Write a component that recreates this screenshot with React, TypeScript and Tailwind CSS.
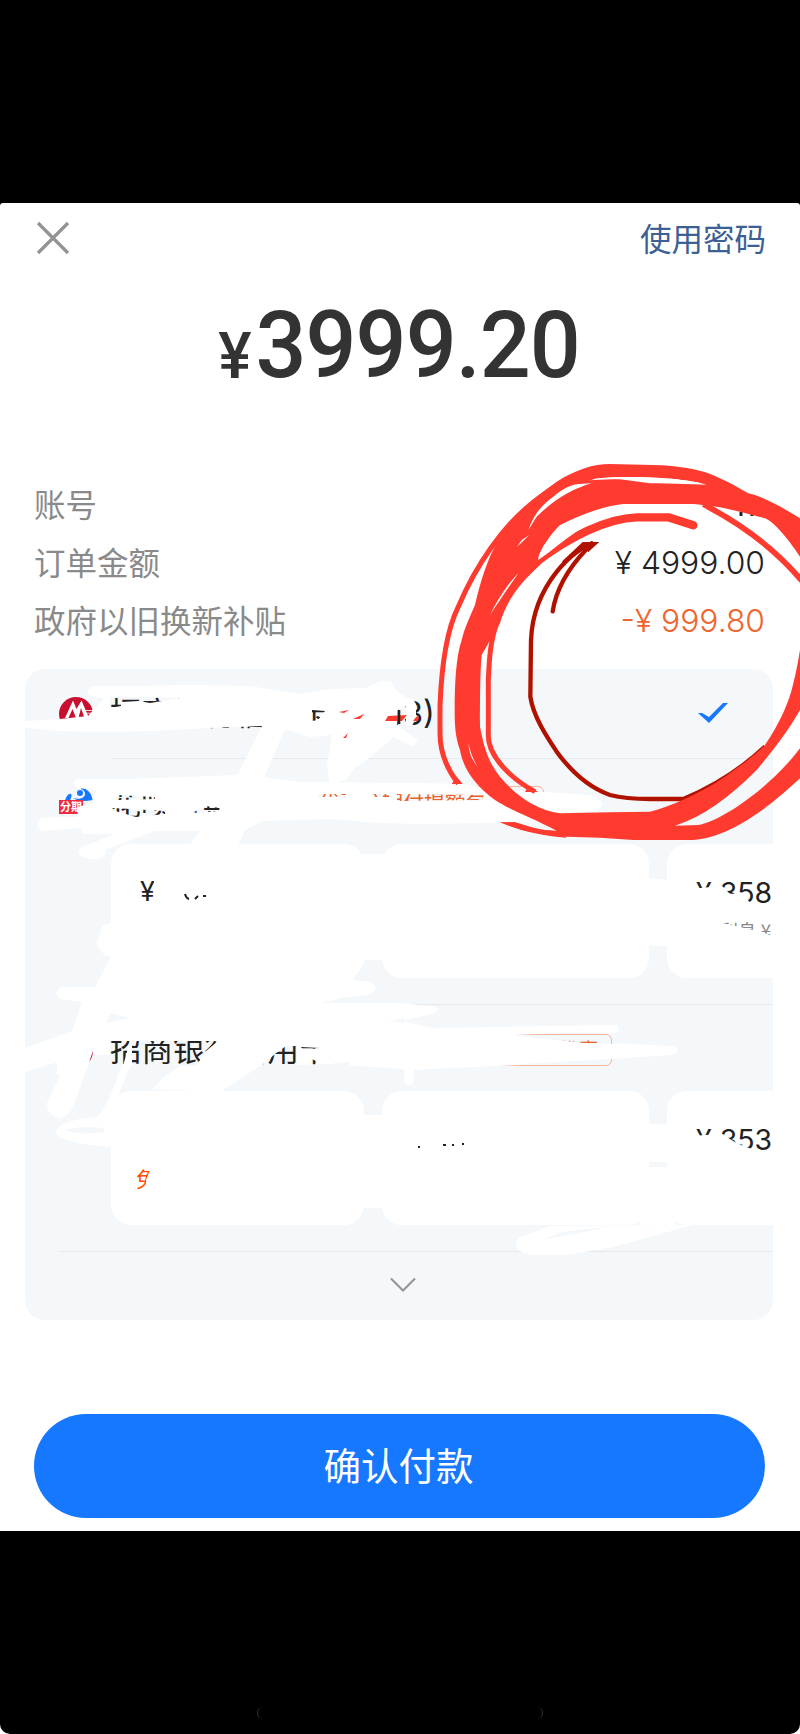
const rows = [
  { label: "账号", value: "****77", color: "text-[#222]" },
  { label: "订单金额", value: "¥ 4999.00", color: "text-[#222]" },
  { label: "政府以旧换新补贴", value: "-¥ 999.80", color: "text-[#f0642d]" },
];

function BankLogo() {
  return (
    <svg viewBox="0 0 34 34" className="w-[34px] h-[34px]">
      <circle cx="17" cy="17" r="17" fill="#c8102e" />
      <path d="M6 21 L14 3.500 L17.500 12 L22.500 3.500 L30 21 L25.500 21 L22 11 L19.500 21 L17 21 L13.500 12 L9.500 21Z" fill="#fff" />
      <path d="M26 13.500 H34 M27 16.200 H34" stroke="#fff" strokeWidth=".8" />
    </svg>
  );
}

function InstallmentLogo() {
  return (
    <div className="relative h-[34px] w-[34px]">
      <svg viewBox="0 0 34 34" className="h-[34px] w-[34px]">
        <path d="M6 14 C7 9 10 6 12 7 C14 9 10 14 10 18Z" fill="#1677ff" />
        <circle cx="21" cy="6" r="3" fill="#1677ff" />
        <path d="M22 0 C29 2 33 7 33.500 13 C25 15 18 14 14 11 C20 13 26 11 26 7 C26 4 24 3 22 2Z" fill="#1677ff" />
      </svg>
      <span className="absolute left-0 top-[13px] flex h-[14px] w-[24px] items-center bg-[#ef2b3f] pl-px text-[11px] leading-none font-bold text-white">
        分期
      </span>
    </div>
  );
}

function Plans({ first, firstNote, last, lastNote }: { first: string; firstNote: string; last: string; lastNote: string }) {
  return (
    <div className="ml-[86px] flex h-[134px] gap-[18px] overflow-hidden">
      <div className="w-[253px] shrink-0 rounded-[20px] bg-white pl-[29px] pt-[34px]">
        <div className="font-[Inter] text-[27px] leading-[28px] text-[#222]">{first}</div>
        <div className="mt-[13px] -ml-[4px] text-[21px] leading-6 text-[#ff5000]">{firstNote}</div>
      </div>
      <div className="w-[267px] shrink-0 rounded-[20px] bg-white" />
      <div className="w-[106px] shrink-0 rounded-l-[20px] bg-white pl-[29px] pt-[35px] whitespace-nowrap">
        <div className="font-[Inter] text-[28.500px] leading-[28px] text-[#222]">{last}</div>
        <div className="mt-[11px] pl-[5px] text-[18.500px] leading-6 text-[#888]">{lastNote}</div>
      </div>
    </div>
  );
}

// White eraser strokes that hide the private details
function Eraser() {
  return (
    <g mask="url(#gaps)" fill="#fff" strokeLinecap="round" strokeLinejoin="round">
      <rect x="600" y="490" width="166" height="29" />
      <path d="M92 686 L140 686 L187 685 L250 686 L300 694 L330 689 L365 688 L381 681 L392 682 L396 691 L404 695 L408 705 L398 709 L397 726 L418 740 L413 747 L394 737 L370 757 L355 768 L345 780 L330 784 L327 765 L332 735 L310 737 L285 729 L264 778 L236 778 L262 726 L210 728 L150 731 L100 732 L60 731 L25 728 L25 721 L60 719 L88 716 L104 698 L92 697 Q84 692 92 686Z" />
      <path d="M406 698 L412 698 L416 704 L416 718 L412 726 L406 726Z" />
      <path d="M78 779 L130 779 L238 775 L263 777 L300 782 L420 783 L462 784 L500 790 L545 792 L590 795 Q610 802 596 811 L560 813 L560 822 L420 824 L380 823 L330 819 L262 821 L245 830 L238 845 L190 845 L200 831 L155 831 L105 850 Q108 859 95 859 Q74 858 80 848 L115 834 L83 834 L80 828 L42 831 Q33 825 42 818 L60 817 L78 817 L77 807 L94 803 L96 790 L78 788 Q70 783 78 779Z" />
      <path d="M356 854 H390 V960 H356Z M640 878 L675 880 V947 L640 945Z M356 1115 H390 V1208 H356Z M640 1124 H675 V1162 H640Z M640 1167 H675 V1225 H640Z" />
      <path d="M111 923 L102 926 L100 936 Q93 944 101 950 Q104 957 111 957 L95 987 L61 987 Q52 993 61 999 L82 1002 L72 1031 L25 1048 V1072 L68 1059 L47 1103 Q47 1116 60 1118 Q72 1114 74 1104 L86 1071 L93 1055 H126 L110 1097 L98 1117 Q55 1120 56 1134 Q65 1144 112 1147 L120 1091 L130 1066 L180 1066 L163 1078 L153 1089 L220 1092 L260 1066 L330 1064 L404 1069 L405 1083 Q409 1087 413 1083 L414 1070 L450 1068 L520 1065 L610 1059 L672 1055 Q684 1050 672 1046 L610 1043 L514 1036 L617 1033 Q620 1028 617 1025 L500 1027 L433 1028 L400 1021 L432 1014 Q444 1008 430 1006 L400 1003 L322 1003 L340 998 L368 995 Q382 988 370 982 L353 980 L364 962 L120 962 L120 983 L210 984 L277 1000 L307 985 L323 978 L364 965Z" />
      <path d="M550 1226 L518 1238 Q511 1252 533 1255 L567 1255 L613 1247 L693 1225Z" />
      <path d="M57 1035 H84 V1075 H57Z" />
    </g>
  );
}

// Hand drawn marker circle, in units of a third of a pixel
function Marker() {
  return (
    <g transform="translate(420 450) scale(.33333)" fill="none">
      <path d="M520 281 C470 290 340 400 333 570 L331 740 C340 800 380 860 410 905 C450 960 500 1010 570 1035 C620 1048 660 1047 700 1047 L790 1047 C880 1010 960 960 1035 890" stroke="#b11200" strokeWidth="13" />
      <path d="M515 280 L500 297 C440 360 408 420 398 484" stroke="#b11200" strokeWidth="13" strokeLinecap="round" />
      <path d="M488 276 H538 L505 306 L495 298 L505 284 L440 336 L425 335Z" fill="#b11200" />
      <g stroke="#ff3b30">
        <path d="M115 1001 C75 950 60 900 60 850 L60 770 C66 600 90 520 115 470 C170 340 250 230 330 165 C380 125 420 95 460 80" strokeWidth="15" />
        <path d="M850 163 C960 220 1060 290 1145 392" strokeWidth="17" />
        <path d="M820 226 L745 202 L650 202 C560 205 450 260 350 335" strokeWidth="25" strokeLinecap="round" strokeLinejoin="round" />
        <path d="M345 1025 C280 990 200 920 205 850 L205 690 C208 620 212 570 230 520" strokeWidth="15" />
      </g>
      <path fill="#ff3b30" d="M330 155 L410 95 C470 58 520 42 570 42 L730 46 C800 52 850 62 885 78 C930 98 960 115 985 130 L940 140 L860 104 C780 80 600 76 525 86 L475 104 L400 138Z" />
      <path fill="#ff3b30" d="M240 1117 H285 L350 1138 L420 1144 L440 1163 C360 1157 300 1142 240 1117Z M315 1026 L355 1026 L325 1008Z M95 1002 H128 L110 980Z" />
      <path fill="#ff3b30" d="M104 780 C104 700 108 620 125 570 C135 530 150 500 165 465 C180 400 200 330 235 270 C270 210 320 160 380 130 C430 100 480 88 600 88 L690 100 L850 100 L950 122 L985 130 C1040 143 1090 175 1140 205 L1140 320 C1100 260 1060 215 1035 205 C960 185 880 162 800 162 L610 162 C540 170 470 200 420 225 C390 255 370 285 352 325 L400 300 L360 345 C300 400 260 450 240 520 C225 545 200 590 185 615 C182 650 180 700 180 830 C190 880 200 930 240 980 C290 1040 350 1080 420 1090 L570 1087 L690 1085 C750 1070 840 1030 900 990 C960 950 1010 910 1035 885 C1080 820 1110 750 1120 700 C1130 660 1135 630 1140 600 L1140 780 C1100 850 1060 900 1010 960 C930 1040 850 1100 765 1127 L835 1125 C900 1115 1050 1015 1140 895 L1140 985 C1080 1040 950 1160 820 1170 L640 1170 L540 1163 L440 1160 C360 1155 300 1140 240 1117 L285 1117 C330 1130 370 1145 410 1142 C330 1100 270 1080 225 1050 C170 1010 130 960 120 900 C105 860 104 820 104 780Z" />
      <path fill="#ff3b30" d="M325 245 L425 195 L560 165 L480 195 C430 218 390 240 352 268 L350 335 L290 375Z" />
      <path fill="#fff" d="M355 322 L372 285 L430 243 C500 205 560 180 640 162 L820 162 L840 166 L830 212 L750 188 L650 189 C590 190 540 205 490 232 C440 262 400 300 355 330Z" />
      <path fill="#fff" d="M400 140 C425 118 450 105 475 102 L515 100 C460 115 400 150 350 200 L325 240 C340 195 365 165 400 140Z M525 86 C600 76 780 80 860 104 L690 98 C630 88 580 84 525 86Z M290 292 L328 255 L305 270Z M210 495 C240 435 270 395 295 370 C260 420 230 465 210 495Z M145 880 C155 920 165 940 175 952 C155 930 148 910 145 880Z" />
    </g>
  );
}

export default function App() {
  return (
    <div className="relative h-[1734px] w-[800px] overflow-hidden bg-white font-['Noto_Sans_CJK_SC',sans-serif]">
      <div className="flex h-full flex-col overflow-hidden rounded-b-[10px] bg-black">
        <div className="mt-[203px] flex h-[1328px] flex-col rounded-t-[3px] bg-white">
          <div className="flex h-[70px] items-center justify-between pl-[36px] pr-[34px]">
            <svg viewBox="0 0 34 34" className="h-[34px] w-[34px]">
              <path d="M2 2 L32 32 M32 2 L2 32" stroke="#939393" strokeWidth="3.200" />
            </svg>
            <span className="text-[31.500px] leading-none text-[#3d5f94]">使用密码</span>
          </div>

          <div className="flex h-[202px] origin-center scale-x-[.965] items-start justify-center pt-[25px] pr-[2px] font-[Roboto] font-semibold text-[#333]">
            <span className="mr-[4px] pt-[18px] text-[65px] leading-[80px] font-medium">¥</span>
            <span className="text-[93px] leading-[96px] font-medium tracking-[-1px]">3999.20</span>
          </div>

          {rows.map(r => (
            <div key={r.label} className="flex h-[58px] shrink-0 items-center justify-between pl-[34px] pr-[35px]">
              <span className="text-[31.500px] leading-none text-[#8a8a8a]">{r.label}</span>
              <span className={`pt-px font-[Inter] text-[31.800px] leading-none font-light ${r.color}`}>{r.value}</span>
            </div>
          ))}

          <div className="ml-[25px] mt-[20px] h-[651px] w-[748px] shrink-0 overflow-hidden rounded-[20px] bg-[#f4f8fa]">
            <div className="flex h-[89px] items-center pl-[34px] pr-[45px]">
              <BankLogo />
              <span className="ml-[17px] flex-1 pb-px text-[31.500px] leading-none text-[#222]">
                招商银行信用卡<span className="font-[Inter] text-[32.500px]">(2543)</span>
              </span>
              <svg viewBox="0 0 30 21" className="mb-[2px] h-[21px] w-[30px]">
                <path d="M0 11 L4 11 L11 15 L25 1 L30 1 L11 21Z" fill="#1677ff" />
              </svg>
            </div>
            <div className="ml-[86px] h-px bg-[#e6eaec]" />
            <div className="flex h-[85px] items-center pl-[34px]">
              <div className="pt-[4px]">
                <InstallmentLogo />
              </div>
              <span className="ml-[17px] text-[31px] leading-none text-[#222]">花呗分期</span>
              <span className="ml-[34px] flex h-[32px] w-[276px] items-center rounded-md border border-[#f9b597] pl-2 text-[21px] whitespace-nowrap text-[#e8622d]">
                专享优惠分期付提额包
              </span>
            </div>
            <Plans first="¥ 1080.16" firstNote="" last="¥ 358" lastNote="含利息 ¥" />
            <div className="ml-[86px] mt-[26px] h-px bg-[#e6eaec]" />
            <div className="flex h-[86px] items-center pl-[34px]">
              <div className="w-[34px] pt-[6px]">
                <BankLogo />
              </div>
              <span className="ml-[17px] pb-px text-[31.500px] leading-none text-[#222]">招商银行信用卡</span>
              <span className="mt-[4px] ml-[157px] flex h-[32px] w-[124px] items-center justify-end rounded-md border border-[#f9b597] pr-3 text-[20px] text-[#e8622d]">
                优惠
              </span>
            </div>
            <Plans first="¥ 1066.45" firstNote="免息" last="¥ 353" lastNote="" />
            <div className="ml-[34px] mt-[26px] h-px bg-[#e6eaec]" />
            <div className="flex h-[66px] items-center justify-center">
              <svg viewBox="0 0 26 16" className="ml-[8px] h-[16px] w-[26px]">
                <path d="M1 1.500 L13 13.500 L25 1.500" fill="none" stroke="#939393" strokeWidth="2" />
              </svg>
            </div>
          </div>

          <button className="ml-[34px] mt-[94px] h-[104px] w-[731px] shrink-0 rounded-full bg-[#1677ff] pr-[2px] pb-[4px] text-[37.500px] leading-none text-white">
            确认付款
          </button>
        </div>
        <div className="mx-auto mt-[176px] flex h-[12px] w-[286px] justify-between">
          <i className="w-[6px] rounded-l-full border-l border-[#333]" />
          <i className="w-[6px] rounded-r-full border-r border-[#333]" />
        </div>
      </div>

      <svg viewBox="0 0 800 1734" className="absolute left-0 top-0 h-[1734px] w-[800px]">
        <mask id="gaps" maskUnits="userSpaceOnUse" x="0" y="0" width="800" height="1734">
          <rect width="800" height="1734" fill="#fff" />
          <g fill="#000">
            <path d="M110 697 L140 697 L180 698 L150 703 L139 701 L121 702 L121 706 L110 708Z M312 710 L325 711 L318 720 L312 721Z M338 711 L348 710 L342 716Z" />
            <path d="M117 795 L155 797 V799 L117 800Z M112 808 L130 809 L165 811 V814 L136 817 L112 810Z M194 812 L206 806 L220 808 L219 811 L196 813Z" />
            <path d="M318 794 L346 794 V797 L318 797Z M372 794 H389 V797 H372Z M397 794 L484 795 L482 800 L397 801Z" />
            <path d="M110 1013 L131 1018 L106 1023Z M65 1130 Q80 1125 104 1128 V1132 Q80 1136 65 1130Z M388 1021 L404 1018 L404 1023Z" />
            <path d="M88 1065 L93 1051 L93 1063Z M110 1041 L130 1041 L123 1066 L110 1066Z M132 1045 L137 1041 L218 1041 L206 1051 L196 1066 H132Z M261 1066 L275 1054 L286 1046 H297 V1066Z M301 1047 L320 1048 L303 1050Z M312 1059 L318 1062 L312 1066Z M334 1063 L350 1062 V1066 L334 1066Z" />
            <path d="M515 1035 L560 1033 H612 V1044 L584 1043 L555 1040Z M520 1064 L612 1059 V1067 H520Z" />
            <path d="M540 1240 L562 1232 L612 1226 L580 1233Z" />
          </g>
        </mask>
        <Eraser />
        {/* cover the plan prices inside the white cards */}
        <path fill="#fff" d="M154 870 H360 V910 H134 V901 L154 901Z M134 1110 H360 V1160 H134Z M153 1163 H200 V1195 H147 L146 1180Z M690 889 L722 886 L730 894 L740 893 L752 904 L690 906Z M690 910 L712 921 L758 931 L773 936 V946 H690Z M670 922 H716 V946 H670Z M690 1136 L722 1134 L738 1144 L752 1149 L752 1156 L690 1156Z" />
        <path stroke="#222" strokeWidth="2" fill="none" d="M185 894 Q186 898 189 899 M195 899 L198 896 M203 896 L206 896 M418 1147 H420 M443 1145 H446 M452 1145 H454 M462 1144 H464" />
        <path fill="#ff3b30" d="M388 716 L407 715 L402 721 L385 721Z M353 719 L364 714 L360 719Z M343 738 L348 733 L346 738Z M339 712 L349 710 L344 713Z M416 717 L419 716 L418 721 L413 721Z" />
        <path stroke="#222" strokeWidth="2.600" d="M399 710 V724" />
        <path stroke="#222" strokeWidth="3" d="M741 512 V516 M752 512 V516 M678 503.500 H684 M686 504 H690" />
        <Marker />
      </svg>
    </div>
  );
}
